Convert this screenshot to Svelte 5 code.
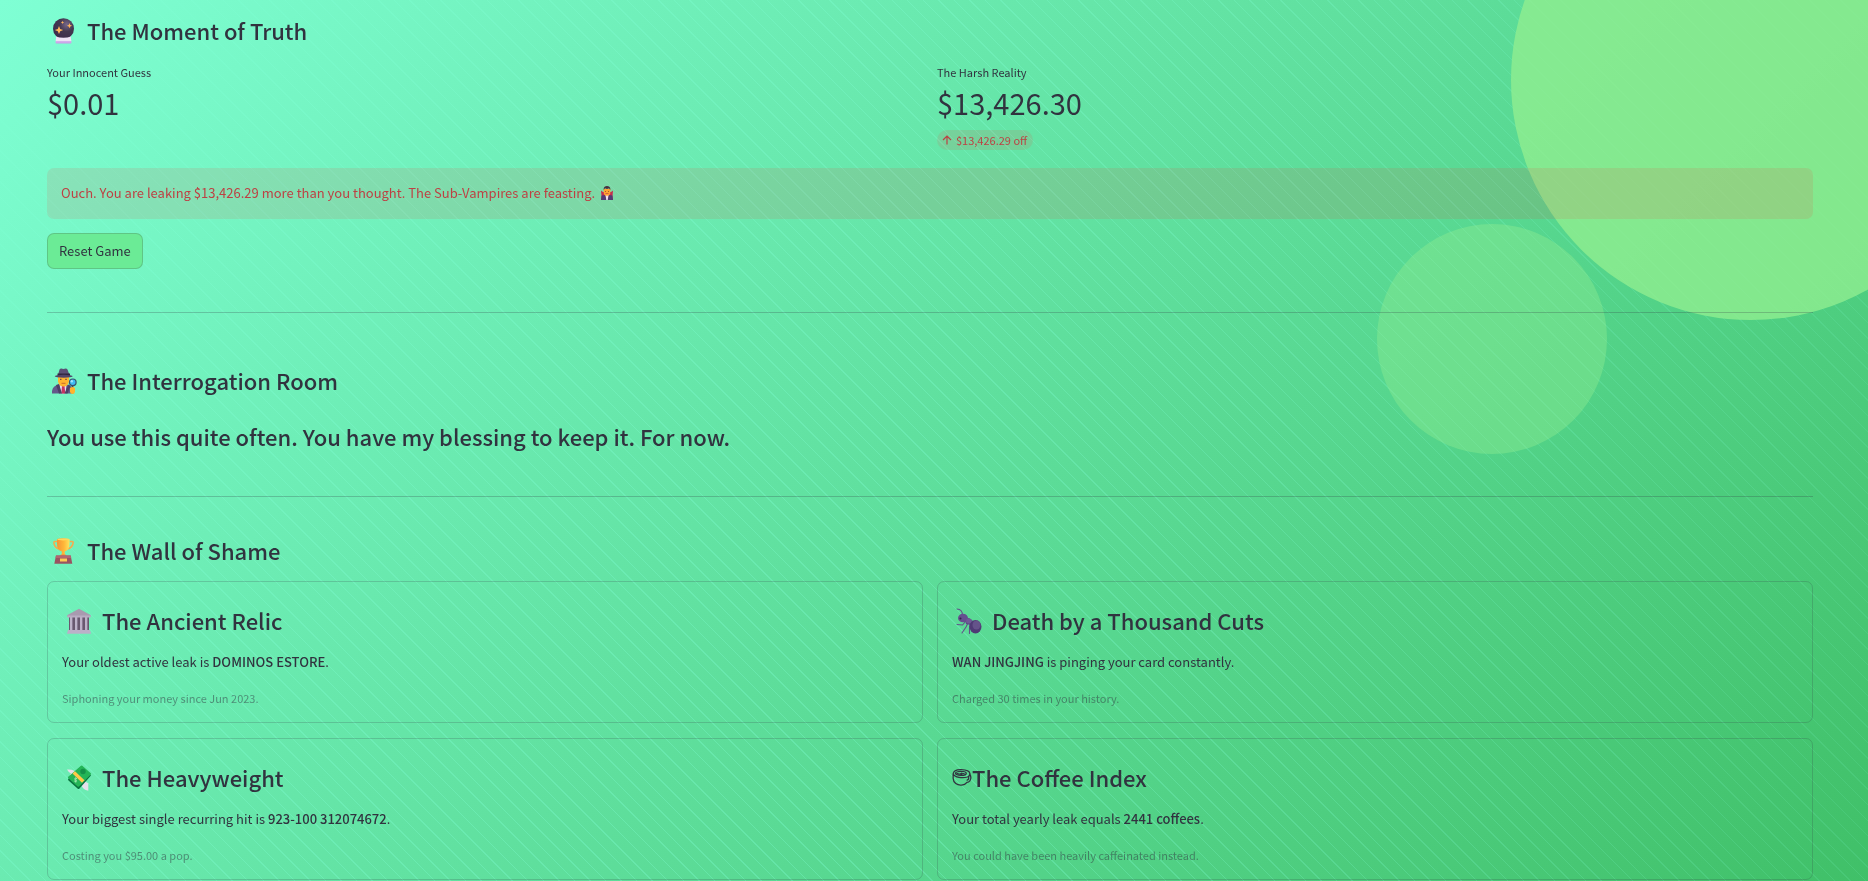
<script lang="ts">
  type Icon = 'crystal' | 'detective' | 'trophy' | 'temple' | 'ant' | 'money' | 'coffee';
  type Card = { icon: Icon; title: string; before: string; strong: string; after: string; note: string };

  const cards: Card[] = [
    { icon: 'temple', title: 'The Ancient Relic', before: 'Your oldest active leak is ', strong: 'DOMINOS ESTORE', after: '.', note: 'Siphoning your money since Jun 2023.' },
    { icon: 'ant', title: 'Death by a Thousand Cuts', before: '', strong: 'WAN JINGJING', after: ' is pinging your card constantly.', note: 'Charged 30 times in your history.' },
    { icon: 'money', title: 'The Heavyweight', before: 'Your biggest single recurring hit is ', strong: '923-100 312074672', after: '.', note: 'Costing you $95.00 a pop.' },
    { icon: 'coffee', title: 'The Coffee Index', before: 'Your total yearly leak equals ', strong: '2441 coffees', after: '.', note: 'You could have been heavily caffeinated instead.' }
  ];
</script>

{#snippet emoji(name: Icon)}
  <span class="emoji" class:outline={name === 'coffee'}>
    <svg viewBox="0 0 26 26" aria-hidden="true">
      {#if name === 'crystal'}
        <defs>
          <radialGradient id="ball" cx=".65" cy=".3" r=".75"><stop offset="0" stop-color="#77688a" /><stop offset=".45" stop-color="#433850" /><stop offset="1" stop-color="#3c2c4c" /></radialGradient>
          <linearGradient id="base" x2="0" y2="1"><stop offset="0" stop-color="#f4eafa" /><stop offset="1" stop-color="#c79be6" /></linearGradient>
        </defs>
        <path d="M5.500 18h14l1 6.500a1 1 0 0 1-1 1h-14a1 1 0 0 1-1-1z" fill="url(#base)" />
        <circle cx="12.500" cy="10.700" r="10.500" fill="url(#ball)" />
        <path d="M5.300 19q7.200 1.500 14.400 0l.6 4h-15.600z" fill="#eee3f6" />
        <path d="M8 8l1.200 2.900 3 1.100-3 1.200L8 16l-1.200-2.800-3-1.200 3-1.100z M18.500 5l.7 1.900 1.900.8-1.900.7-.7 1.900-.8-1.900-1.800-.7 1.800-.8z M11.500 2.700l.5 1.200 1.200.5-1.200.5-.5 1.200-.5-1.200-1.200-.5 1.200-.5z" fill="#ffb65c" />
      {:else if name === 'detective'}
        <path d="M1 25.500q-.5-6 4-8l3-1h8l4 2q2.500 2 2.500 7z" fill="#65588a" />
        <path d="M8.500 17h7l-1 8.500h-5z" fill="#e6dff0" />
        <path d="M11 18h2.500l.8 7.500h-4z" fill="#c63561" />
        <path d="M5 17l3-1 3 9.500H8z M17.500 16.500l2 1.500-3 7.500h-3z" fill="#4c4065" />
        <path d="M7 8h11v5.500q-1 5-5.500 5T7 13.500z" fill="#ffb52e" />
        <path d="M9.800 10.700v1.300M15 10.700v1.300" stroke="#53334b" stroke-width="1.200" />
        <path d="M10.500 15.300h4" stroke="#cb6c2b" />
        <path d="M7 7L8.500 1.500Q9.500-.2 12.500 1q3-1.200 4 .5L18.500 7z" fill="#5b5075" />
        <path d="M6.500 5.500h12.500v2.500H6.500z" fill="#30273f" />
        <ellipse cx="12.700" cy="8.300" rx="9" ry="1.500" fill="#51456a" />
        <path d="M21.500 18v7" stroke="#4b4058" stroke-width="1.700" />
        <path d="M19 20q2.500-2 5 0v4q-.5 2-2.500 2T19 24z" fill="#ffb52e" />
        <circle cx="21.800" cy="14.300" r="3.300" fill="#3ebcf4" stroke="#38526f" stroke-width="1.200" />
        <circle cx="20.800" cy="13.300" r="1.200" fill="#a3e7ff" />
      {:else if name === 'trophy'}
        <defs><linearGradient id="cup"><stop offset="0" stop-color="#f49436" /><stop offset=".55" stop-color="#ffb638" /><stop offset="1" stop-color="#ffe35e" /></linearGradient></defs>
        <path d="M6 3.500H3.800Q2.500 3.500 3 5.500q1 4.500 5 5.500M18.500 3.500h2.700q1.300 0 .8 2-1 4.500-5.500 5.500" fill="none" stroke="#f9a94a" stroke-width="1.500" />
        <path d="M6 1q6.200-1.500 12.500 0v5q0 6-4.700 7.500v4.500h-3v-4.500Q6 12 6 6z" fill="url(#cup)" />
        <ellipse cx="12.300" cy="1.400" rx="6" ry="1" fill="#ffd85d" />
        <path d="M9 18q.5-2 3.300-2t3.200 2z" fill="#f79a37" />
        <path d="M5 17.500h14.700l1.600 8.300H3.300z" fill="#9a5361" />
        <path d="M5 17.500h14.700l.5 2.500H4.500z" fill="#b36570" />
        <path d="M9 20.500h7v3H9z" fill="#ffca55" />
      {:else if name === 'temple'}
        <path d="M3 9h20v14H3z" fill="#69586f" />
        <path d="M4 9h3v14H4z M9 9h2.500v14H9z M14 9h2.500v14H14z M19 9h3v14h-3z" fill="#bdb2c8" />
        <path d="M6 9h1v14H6zM11 9h1v14h-1zM16 9h1v14h-1zM21 9h1v14h-1z" fill="#887891" />
        <path d="M13 .8L24.500 7q.7 1-.2 1.800H1.700Q.8 8 1.500 7z" fill="#a89aaf" />
        <path d="M1.500 7.500h23v2h-23z" fill="#b9adc2" />
        <path d="M2 22h22l1 3.700H1z" fill="#bbb0c8" />
      {:else if name === 'ant'}
        <g fill="none" stroke="#62518a" stroke-width="1.100" stroke-linecap="round">
          <path d="M6.500 7Q6.500 1.500 1 1M10 13L6.500 17 1 16.500M12 15l-2 4-4 6M14 15l-.5 5V25.500M16 14l-1 6" />
        </g>
        <path d="M9 11l4-1 4 3-2 4-5-1z" fill="#5c4885" />
        <ellipse cx="7" cy="10" rx="5" ry="4.300" fill="#65508f" />
        <ellipse cx="13" cy="13" rx="3" ry="2.500" fill="#6e5b96" />
        <ellipse cx="19.500" cy="18.700" rx="6" ry="6.700" fill="#4f3b75" />
        <ellipse cx="20.500" cy="17" rx="4" ry="4.500" fill="#65538a" />
        <circle cx="4.500" cy="10.500" r="1" fill="#332447" />
      {:else if name === 'money'}
        <path d="M1 4.500q8-.5 11 5l-6 2q-1.500-1-2-2l1-1q-2-.5-4-4z M15 19l4-3q2 1 2 2l1.300-.2v8q-5.500-.7-7.300-6.800z" fill="#e4e0eb" />
        <path d="M15.500 1L25 10.500 13.500 23.500q-1 1.200-2 0L2.500 15.500q-1-1 0-2z" fill="#08733e" />
        <path d="M15 .8q.6-.6 1.300 0l8.500 7.500q.6.6 0 1.300L13 21.500q-.7.7-1.400 0L2.200 13q-.7-.7 0-1.300z" fill="#24b557" />
        <circle cx="17" cy="6.500" r="2.700" fill="#149249" />
        <path d="M6.500 8.500L9 6.300l9.500 9-2.500 2.500z" fill="#ffc94a" />
        <path d="M11 13.700q-2-1.500-2.400 0 0 1 1 1.200 1.200.5.700 1.400-1 .8-2.200-.5M9.800 12.600v5" fill="none" stroke="#a2ebb4" stroke-width=".9" />
      {:else}
        <g fill="none" stroke="currentColor" stroke-width="1.700" stroke-linecap="round">
          <path d="M1.500 9C2 5 6 3.300 12 3.500c8 .3 11 3 11.300 5 .2 2.200-1.300 3.800-3.300 4.500C13.500 15 3.500 13.500 1.500 9V15c.3 5.500 5 9 11 8.500 3 0 5.500-1.500 7-3.500 3 0 5.300-3 5-6.500-.2-2.200-.8-3.500-1.500-4.500" />
          <path d="M19.700 17q2.500-.5 2-3.500" />
          <ellipse cx="11.500" cy="8.300" rx="7" ry="2.500" />
          <path d="M6.500 8.300q3.500 2.200 6-.2M12 9.800q2-1.800 4.500-.7" />
        </g>
      {/if}
    </svg>
  </span>
{/snippet}

<div class="backdrop"><span class="stripes"></span><span class="disc large"></span><span class="disc small"></span></div>
<main>
  <h2>{@render emoji('crystal')}The Moment of Truth</h2>
  <div class="columns metrics">
    <div>
      <p class="label">Your Innocent Guess</p>
      <p class="value">$0.01</p>
    </div>
    <div>
      <p class="label">The Harsh Reality</p>
      <p class="value">$13,426.30</p>
      <p class="delta">
        <svg viewBox="0 0 10 10" aria-hidden="true"><path d="M5 9.500V1M1 5l4-4 4 4" /></svg>
        <span>$13,426.29 off</span>
      </p>
    </div>
  </div>
  <div class="alert" role="alert">
    Ouch. You are leaking $13,426.29 more than you thought. The Sub-Vampires are feasting.
    <svg class="vampire" viewBox="0 0 14 14" aria-hidden="true">
      <path d="M3 6L1 4.500l.5 5.500L1 14h12l-.5-4 .5-5.500L11 6z" fill="#c42e50" />
      <path d="M1.500 9.500L5 9l2 5H1zM12.500 9.500L9 9l-2 5h6z" fill="#523d73" />
      <path d="M5.500 9h3L7.700 14H6.300z" fill="#f1e5f2" />
      <path d="M3.700 3h6.600v4Q10 9.800 7 9.800T3.700 7z" fill="#ffa331" />
      <path d="M3.700 4V2.500Q4 0 7 0t3.300 2.500V4L9 2.300 7 3 5 2.300z" fill="#483040" />
      <path d="M5.500 5v1M8.500 5v1" stroke="#a0602f" />
      <path d="M5.500 7.500h3" stroke="#d9603e" />
    </svg>
  </div>
  <button type="button">Reset Game</button>
  <hr />
  <h2 class="room">{@render emoji('detective')}The Interrogation Room</h2>
  <h2 class="verdict">You use this quite often. You have my blessing to keep it. For now.</h2>
  <hr />
  <h2 class="wall">{@render emoji('trophy')}The Wall of Shame</h2>
  <div class="columns cards">
    {#each cards as card}
      <section>
        <h2>{@render emoji(card.icon)}{card.title}</h2>
        <p class="fact">{card.before}<strong>{card.strong}</strong>{card.after}</p>
        <p class="note">{card.note}</p>
      </section>
    {/each}
  </div>
</main>

<style>
  :global(body) { overflow: hidden; }
  .backdrop {
    position: fixed;
    inset: 0;
    overflow: hidden;
    background: linear-gradient(135deg, #7fffd4, #40c068);
  }
  .stripes {
    position: absolute;
    inset: 0;
    background: repeating-linear-gradient(45deg, transparent 0 10px, #7fffd44d 10px 11px);
    mask-image: linear-gradient(to right, #000 50%, #0006);
  }
  .disc { position: absolute; border-radius: 50%; background: #90ee90; }
  .large { width: 480px; height: 480px; top: -160px; right: -123px; opacity: .8; }
  .small { width: 230px; height: 230px; top: 224px; right: 261px; opacity: .4; }
  main {
    position: relative;
    padding: 10px 55px 0 47px;
    font: 13px/22px "Noto Sans CJK SC", "Noto Sans", sans-serif;
    color: #31333f;
  }
  h2, p { margin: 0; }
  h2 { display: flex; align-items: center; font-size: 22px; font-weight: 500; line-height: 40px; }
  .emoji { display: flex; box-sizing: border-box; width: 40px; padding: 2px 0 0 4px; }
  .emoji svg { width: 26px; height: 26px; }
  .emoji.outline { width: 20px; padding: 0; }
  .emoji.outline svg { width: 20px; height: 20px; }
  .columns { display: grid; grid-template-columns: 1fr 1fr; column-gap: 14px; row-gap: 15px; }
  .metrics { min-height: 107px; margin-top: 11px; }
  .label, .note, .delta { font-size: 11px; }
  .value { font-size: 29px; line-height: 38px; }
  .delta {
    display: inline-flex;
    align-items: center;
    gap: 4px;
    margin-top: 9px;
    padding: 0 6px 0 5px;
    border-radius: 10px;
    line-height: 20px;
    color: #bd4043;
    background: #ff2b2b1c;
  }
  .delta svg { width: 10px; height: 10px; fill: none; stroke: currentColor; stroke-width: 1.2; }
  .alert {
    display: flex;
    align-items: center;
    gap: 5px;
    padding: 14px 14px 15px;
    border-radius: 7px;
    color: #bd4043;
    background: #ff2b2b1c;
  }
  .vampire { width: 14px; height: 14px; }
  button {
    display: block;
    height: 36px;
    margin: 14px 0 0;
    padding: 0 11px;
    border: 1px solid #31333f33;
    border-radius: 7px;
    font: inherit;
    color: inherit;
    background: #6beb96;
  }
  hr { height: 1px; margin: 43px 0 0; border: 0; background: #31333f40; }
  .room { margin-top: 47px; }
  .verdict { margin-top: 16px; }
  .verdict + hr { margin-top: 40px; }
  .wall { margin-top: 33px; }
  .cards { margin-top: 11px; }
  section { padding: 18px 14px 13px; border: 1px solid #31333f33; border-radius: 7px; }
  .fact { margin-top: 11px; }
  strong { font-weight: 500; }
  .note { margin-top: 14px; opacity: .5; }
</style>
